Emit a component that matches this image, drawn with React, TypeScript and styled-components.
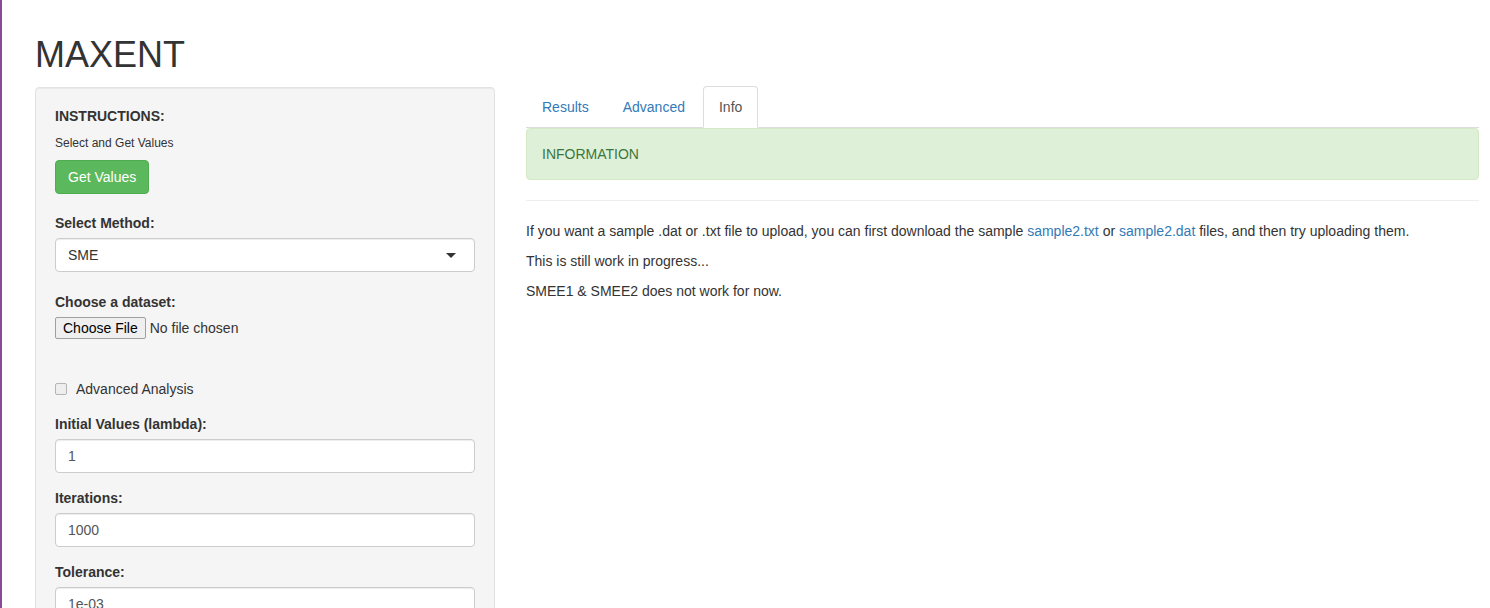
import styled, { createGlobalStyle } from "styled-components";

const GlobalStyle = createGlobalStyle`
  * {
    box-sizing: border-box;
  }
  body {
    margin: 0;
    font-family: "Liberation Sans", Arial, sans-serif;
    font-size: 14px;
    line-height: 20px;
    color: #333;
    background: #fff;
  }
`;

const Page = styled.div`
  min-height: 100vh;
  border-left: 2px solid #8b4a97;
  padding: 35px 11px 0 33px;
`;

const Title = styled.h2`
  margin: 0 0 11px;
  font-size: 36px;
  line-height: 40px;
  font-weight: 400;
`;

const Row = styled.div`
  display: flex;
  align-items: flex-start;
  gap: 31px;
`;

const Well = styled.div`
  width: 460px;
  flex: none;
  margin-top: 1px;
  padding: 19px;
  background: #f5f5f5;
  border: 1px solid #e3e3e3;
  border-radius: 4px;
  box-shadow: inset 0 1px 1px rgba(0, 0, 0, 0.05);
  display: flex;
  flex-direction: column;
  align-items: flex-start;
`;

const Heading = styled.h5`
  margin: 2px 0 11px;
  font-size: 14px;
  line-height: 15.4px;
  font-weight: 700;
`;

const Note = styled.p`
  margin: 0 0 9px;
  font-size: 12px;
  line-height: 16px;
`;

const GreenButton = styled.button`
  height: 34px;
  margin-bottom: 19px;
  padding: 6px 12px;
  font: inherit;
  line-height: 20px;
  color: #fff;
  background: #5cb85c;
  border: 1px solid #4cae4c;
  border-radius: 4px;
`;

const FormGroup = styled.div<{ $after?: number }>`
  width: 100%;
  margin-bottom: ${(p) => p.$after ?? 15}px;
`;

const Label = styled.label`
  display: block;
  margin-bottom: 5px;
  font-weight: 700;
`;

const SelectBox = styled.div`
  position: relative;
  height: 34px;
  padding: 6px 12px;
  background: #fff;
  border: 1px solid #ccc;
  border-radius: 4px;
  box-shadow: inset 0 1px 1px rgba(0, 0, 0, 0.075);
  color: #333;
`;

const Caret = styled.span`
  position: absolute;
  right: 18px;
  top: 14px;
  width: 0;
  height: 0;
  border-left: 5px solid transparent;
  border-right: 5px solid transparent;
  border-top: 5px solid #333;
`;

const FileRow = styled.div`
  display: flex;
  align-items: center;
  gap: 4px;
`;

const FileButton = styled.span`
  height: 22px;
  padding: 0 7px;
  line-height: 20px;
  color: #000;
  background: #efefef;
  border: 1px solid #a0a0a0;
  border-radius: 2px;
`;

const CheckRow = styled.label`
  display: flex;
  align-items: center;
  gap: 9px;
  margin: 40px 0 15px;
`;

const Check = styled.span`
  width: 12px;
  height: 12px;
  background: #eee;
  border: 1px solid #b5b5b5;
  border-radius: 2px;
`;

const TextInput = styled.input`
  display: block;
  width: 100%;
  height: 34px;
  padding: 6px 12px;
  font: inherit;
  color: #555;
  background: #fff;
  border: 1px solid #ccc;
  border-radius: 4px;
  box-shadow: inset 0 1px 1px rgba(0, 0, 0, 0.075);
  outline: none;
`;

const Main = styled.div`
  flex: 1;
  min-width: 0;
`;

const Tabs = styled.ul`
  display: flex;
  margin: 0;
  padding: 0;
  list-style: none;
  border-bottom: 1px solid #ddd;
`;

const Tab = styled.li<{ $active?: boolean }>`
  margin: 0 2px -1px 0;
  padding: 10px 15px;
  line-height: 20px;
  border: 1px solid ${(p) => (p.$active ? "#ddd" : "transparent")};
  border-bottom-color: transparent;
  border-radius: 4px 4px 0 0;
  background: ${(p) => (p.$active ? "#fff" : "transparent")};
  color: ${(p) => (p.$active ? "#555" : "#337ab7")};
`;

const Alert = styled.div`
  padding: 15px;
  color: #3c763d;
  background: #dff0d8;
  border: 1px solid #d6e9c6;
  border-radius: 4px;
`;

const Divider = styled.hr`
  margin: 20px 0;
  border: 0;
  border-top: 1px solid #eee;
`;

const Para = styled.p`
  margin: 0 0 10px;
`;

const Link = styled.a`
  color: #337ab7;
  text-decoration: none;
`;

const fields = [
  { label: "Initial Values (lambda):", value: "1" },
  { label: "Iterations:", value: "1000" },
  { label: "Tolerance:", value: "1e-03" },
];

function App() {
  return (
    <Page>
      <GlobalStyle />
      <Title>MAXENT</Title>
      <Row>
        <Well>
          <Heading>INSTRUCTIONS:</Heading>
          <Note>Select and Get Values</Note>
          <GreenButton>Get Values</GreenButton>
          <FormGroup $after={20}>
            <Label>Select Method:</Label>
            <SelectBox>
              SME
              <Caret />
            </SelectBox>
          </FormGroup>
          <FormGroup $after={0}>
            <Label>Choose a dataset:</Label>
            <FileRow>
              <FileButton>Choose File</FileButton>
              <span>No file chosen</span>
            </FileRow>
          </FormGroup>
          <CheckRow>
            <Check />
            Advanced Analysis
          </CheckRow>
          {fields.map((f) => (
            <FormGroup key={f.label}>
              <Label>{f.label}</Label>
              <TextInput defaultValue={f.value} />
            </FormGroup>
          ))}
        </Well>
        <Main>
          <Tabs>
            <Tab>Results</Tab>
            <Tab>Advanced</Tab>
            <Tab $active>Info</Tab>
          </Tabs>
          <Alert>INFORMATION</Alert>
          <Divider />
          <Para>
            If you want a sample .dat or .txt file to upload, you can first
            download the sample <Link href="#">sample2.txt</Link> or{" "}
            <Link href="#">sample2.dat</Link> files, and then try uploading
            them.
          </Para>
          <Para>This is still work in progress...</Para>
          <Para>SMEE1 &amp; SMEE2 does not work for now.</Para>
        </Main>
      </Row>
    </Page>
  );
}

export default App;
